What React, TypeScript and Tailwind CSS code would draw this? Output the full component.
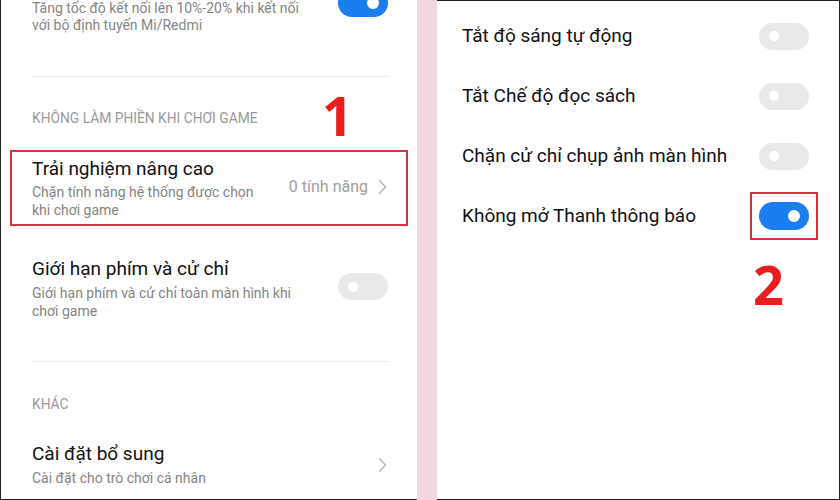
import React from "react";

const font = { fontFamily: "Roboto, 'Noto Sans', sans-serif" };

function Toggle({ on }: { on?: boolean }) {
  return on ? (
    <div className="flex h-[28px] w-[50px] shrink-0 items-center justify-end rounded-full bg-[#1a7df0] pr-[9px]">
      <div className="h-[12px] w-[12px] rounded-full bg-white" />
    </div>
  ) : (
    <div className="flex h-[27px] w-[50px] shrink-0 items-center rounded-full bg-[#e9e9e9] pl-[10px]">
      <div className="h-[10px] w-[10px] rounded-full bg-white" />
    </div>
  );
}

function Chevron() {
  return (
    <svg width="9" height="16" viewBox="0 0 9 16" fill="none" className="shrink-0">
      <path d="M1.5 1.5 L7.5 8 L1.5 14.5" stroke="#b5b5b5" strokeWidth="1.4" strokeLinecap="round" strokeLinejoin="round" />
    </svg>
  );
}

export default function App() {
  return (
    <div className="flex h-[500px] w-[840px] overflow-hidden bg-white" style={font}>
      {/* Left panel */}
      <div className="relative flex h-[500px] w-[417px] shrink-0 flex-col border-b border-l border-[#222] bg-white">
        {/* row cut off at top */}
        <div className="flex items-start justify-between pl-[31px] pr-[29px]">
          <div className="text-[14px] leading-[17px] text-[#858585]">
            <div>Tăng tốc độ kết nối lên 10%-20% khi kết nối</div>
            <div>với bộ định tuyến Mi/Redmi</div>
          </div>
          <div className="-mt-[11px]">
            <Toggle on />
          </div>
        </div>
        <div className="mt-[42px] ml-[31px] mr-[29px] h-px bg-[#ececec]" />
        <div className="mt-[32px] pl-[31px] text-[13.8px] leading-[18px] text-[#9a9a9a]">
          KHÔNG LÀM PHIỀN KHI CHƠI GAME
        </div>
        {/* highlighted row */}
        <div className="mx-[9px] mt-[23px] flex h-[76px] items-center justify-between border-[2.5px] border-[#d8303f] pl-[20px] pr-[19px]">
          <div className="flex flex-col">
            <div className="text-[19px] leading-[22px] text-[#111]">Trải nghiệm nâng cao</div>
            <div className="mt-[3px] text-[14px] leading-[18px] text-[#858585]">
              <div>Chặn tính năng hệ thống được chọn</div>
              <div>khi chơi game</div>
            </div>
          </div>
          <div className="-mt-[2px] flex items-center gap-[10px]">
            <span className="text-[16px] text-[#a0a0a0]">0 tính năng</span>
            <Chevron />
          </div>
        </div>
        <div className="mt-[32px] flex items-start justify-between pl-[31px] pr-[29px]">
          <div className="flex flex-col">
            <div className="text-[19px] leading-[22px] text-[#111]">Giới hạn phím và cử chỉ</div>
            <div className="mt-[4px] text-[14px] leading-[18px] text-[#858585]">
              <div>Giới hạn phím và cử chỉ toàn màn hình khi</div>
              <div>chơi game</div>
            </div>
          </div>
          <div className="mt-[15px]">
            <Toggle />
          </div>
        </div>
        <div className="mt-[41px] ml-[31px] mr-[29px] h-px bg-[#ececec]" />
        <div className="mt-[33px] pl-[31px] text-[13.8px] leading-[18px] text-[#9a9a9a]">KHÁC</div>
        <div className="mt-[30px] flex items-center justify-between pl-[31px] pr-[30px]">
          <div className="flex flex-col">
            <div className="text-[19px] leading-[22px] text-[#111]">Cài đặt bổ sung</div>
            <div className="mt-[4px] text-[14px] leading-[18px] text-[#858585]">Cài đặt cho trò chơi cá nhân</div>
          </div>
          <Chevron />
        </div>
        <div className="absolute left-[321px] top-[88px] text-[54px] font-bold leading-[54px] text-[#ec1c1c]" style={{ fontFamily: "'Open Sans', 'Liberation Sans', sans-serif" }}>
          1
        </div>
      </div>

      {/* pink divider */}
      <div className="h-[500px] w-[20px] shrink-0 bg-[#f1d6de]" />

      {/* Right panel */}
      <div className="relative flex h-[500px] flex-1 flex-col border-t border-r border-b border-[#222] bg-white pt-[5px]">
        {[
          "Tắt độ sáng tự động",
          "Tắt Chế độ đọc sách",
          "Chặn cử chỉ chụp ảnh màn hình",
        ].map((t) => (
          <div key={t} className="flex h-[60px] items-center justify-between pl-[25px] pr-[30px]">
            <span className="text-[19px] leading-[22px] text-[#111]">{t}</span>
            <Toggle />
          </div>
        ))}
        <div className="flex h-[60px] items-center justify-between pl-[25px] pr-[21px]">
          <span className="text-[19px] leading-[22px] text-[#111]">Không mở Thanh thông báo</span>
          <div className="flex h-[48px] w-[68px] items-center justify-center border-[2.5px] border-[#d8303f]">
            <Toggle on />
          </div>
        </div>
        <div className="absolute left-[316px] top-[256px] text-[54px] font-bold leading-[54px] text-[#ec1c1c]" style={{ fontFamily: "'Open Sans', 'Liberation Sans', sans-serif" }}>
          2
        </div>
      </div>
    </div>
  );
}
